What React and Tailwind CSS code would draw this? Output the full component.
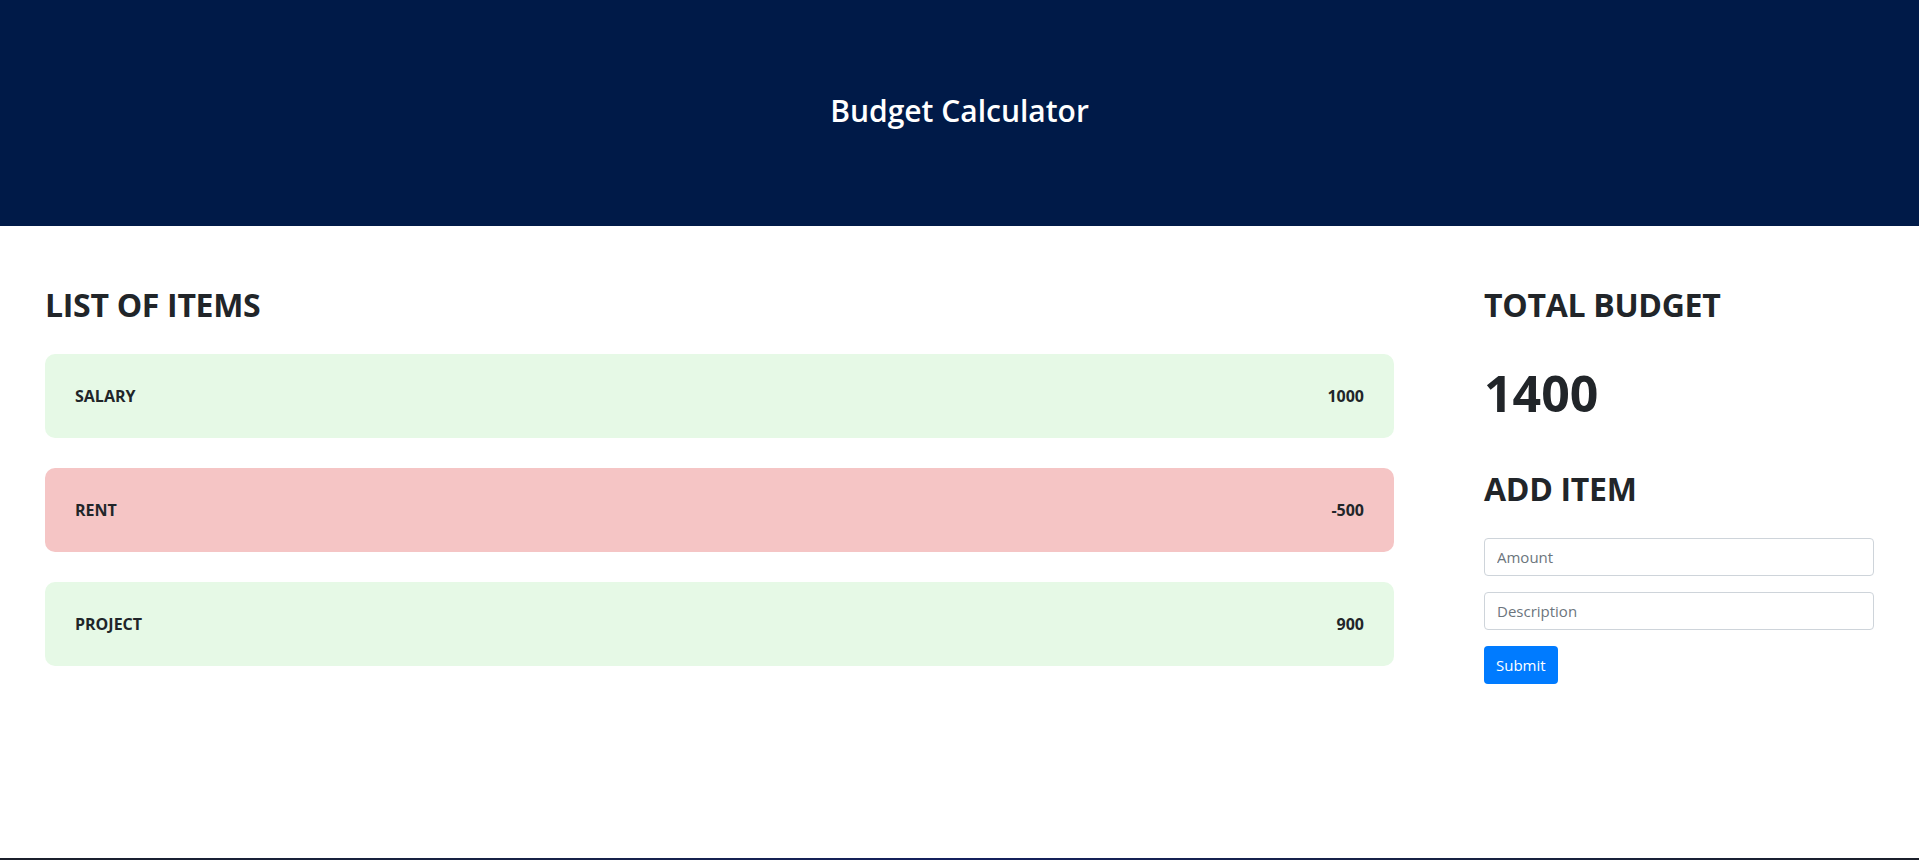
const items = [
    { id: 1, desc: 'SALARY', amount: 1000 },
    { id: 2, desc: 'RENT', amount: -500 },
    { id: 3, desc: 'PROJECT', amount: 900 },
]

export default function App() {
    const total = items.reduce((s, i) => s + i.amount, 0)

    return (
        <div className="min-h-[860px] flex flex-col bg-white text-[#212529]" style={{ fontFamily: '"Open Sans", "Noto Sans", sans-serif' }}>
            <header className="h-[226px] bg-[#001a48] flex items-center justify-center">
                <h1 className="text-[30px] font-semibold text-white -mt-[6px]">Budget Calculator</h1>
            </header>

            <main className="flex-1 flex gap-[90px] px-[45px] pt-[60px]">
                <section className="flex-1">
                    <h2 className="text-[32px] font-bold leading-[1.2] tracking-[-0.3px]">LIST OF ITEMS</h2>
                    <div className="mt-[30px] flex flex-col gap-[30px]">
                        {items.map((item) => (
                            <div
                                key={item.id}
                                className={`h-[84px] rounded-[10px] px-[30px] flex items-center justify-between text-[16px] font-bold ${item.amount < 0 ? 'bg-[#f5c5c5]' : 'bg-[#e6f9e6]'}`}
                            >
                                <span>{item.desc}</span>
                                <span>{item.amount}</span>
                            </div>
                        ))}
                    </div>
                </section>

                <aside className="w-[390px] shrink-0">
                    <h2 className="text-[32px] font-bold leading-[1.2] tracking-[-0.3px]">TOTAL BUDGET</h2>
                    <p className="mt-[39px] text-[50px] font-bold leading-[1.2]">{total}</p>
                    <h2 className="mt-[47px] text-[32px] font-bold leading-[1.2] tracking-[-0.3px]">ADD ITEM</h2>
                    <form className="mt-[29px] flex flex-col gap-[16px] items-start" onSubmit={(e) => e.preventDefault()}>
                        <input
                            placeholder="Amount"
                            className="w-full h-[38px] px-[12px] border border-[#ced4da] rounded-[4px] text-[15px] placeholder:text-[#6c757d] outline-none"
                        />
                        <input
                            placeholder="Description"
                            className="w-full h-[38px] px-[12px] border border-[#ced4da] rounded-[4px] text-[15px] placeholder:text-[#6c757d] outline-none"
                        />
                        <button className="h-[38px] px-[12px] rounded-[4px] bg-[#007bff] text-white text-[15px]">Submit</button>
                    </form>
                </aside>
            </main>

            <footer className="h-[2px] bg-gradient-to-r from-[#1b1f2a] via-[#14205e] to-[#1b1f2a]" />
        </div>
    )
}
